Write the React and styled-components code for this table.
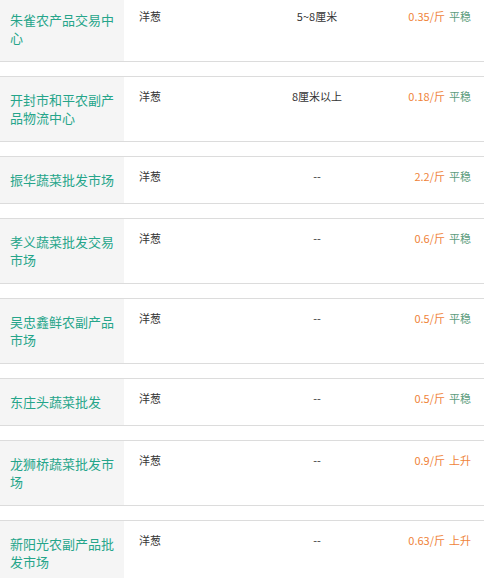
import React from "react";
import styled, { createGlobalStyle } from "styled-components";

const Global = createGlobalStyle`
  html, body {
    margin: 0;
    padding: 0;
    background: #fff;
    overflow: hidden;
  }
  body {
    font-family: "Microsoft YaHei", "Noto Sans CJK SC", "Noto Sans", sans-serif;
  }
`;

const List = styled.div`
  display: flex;
  flex-direction: column;
  gap: 14px;
  margin-top: -4px;
`;

const Card = styled.div`
  display: grid;
  grid-template-columns: 124px 110px 166px 1fr;
  border-top: 1px solid #dcdcdc;
  border-bottom: 1px solid #dcdcdc;
  background: #fff;
`;

const Name = styled.div`
  background: #f5f5f5;
  color: #25a58a;
  font-size: 13px;
  line-height: 18px;
  padding: 14px 10px;
  display: flex;
  align-items: center;
`;

const Cell = styled.div`
  font-size: 11px;
  line-height: 18px;
  color: #333;
  padding-top: 10px;
  padding-left: ${(p) => p.$pl || 0}px;
  padding-right: ${(p) => p.$pr || 0}px;
  text-align: ${(p) => p.$align || "left"};
  white-space: nowrap;
`;

const Price = styled.span`
  color: #ef8339;
`;

const Trend = styled.span`
  color: ${(p) => (p.$up ? "#ef8339" : "#5b9c7c")};
  margin-left: 4px;
`;

const rows = [
  { name: "朱雀农产品交易中心", kind: "洋葱", spec: "5~8厘米", price: "0.35/斤", trend: "平稳" },
  { name: "开封市和平农副产品物流中心", kind: "洋葱", spec: "8厘米以上", price: "0.18/斤", trend: "平稳" },
  { name: "振华蔬菜批发市场", kind: "洋葱", spec: "--", price: "2.2/斤", trend: "平稳" },
  { name: "孝义蔬菜批发交易市场", kind: "洋葱", spec: "--", price: "0.6/斤", trend: "平稳" },
  { name: "吴忠鑫鲜农副产品市场", kind: "洋葱", spec: "--", price: "0.5/斤", trend: "平稳" },
  { name: "东庄头蔬菜批发", kind: "洋葱", spec: "--", price: "0.5/斤", trend: "平稳" },
  { name: "龙狮桥蔬菜批发市场", kind: "洋葱", spec: "--", price: "0.9/斤", trend: "上升" },
  { name: "新阳光农副产品批发市场", kind: "洋葱", spec: "--", price: "0.63/斤", trend: "上升" },
];

export default function App() {
  return (
    <>
      <Global />
      <List>
        {rows.map((r) => (
          <Card key={r.name}>
            <Name>{r.name}</Name>
            <Cell $pl={15}>{r.kind}</Cell>
            <Cell $align="center">{r.spec}</Cell>
            <Cell $align="right" $pr={13}>
              <Price>{r.price}</Price>
              <Trend $up={r.trend === "上升"}>{r.trend}</Trend>
            </Cell>
          </Card>
        ))}
      </List>
    </>
  );
}
